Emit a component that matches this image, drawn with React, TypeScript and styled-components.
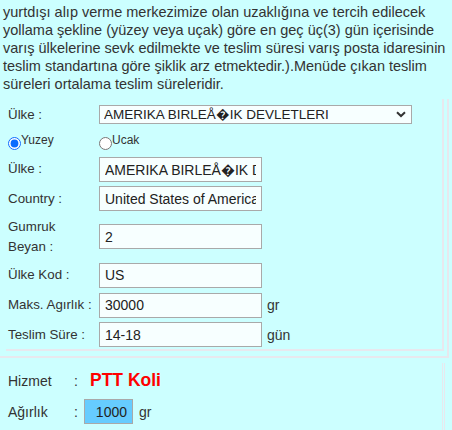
import React from "react";
import styled, { createGlobalStyle } from "styled-components";

const Global = createGlobalStyle`
  html, body { margin: 0; padding: 0; background: #ccffff; }
  body { font-family: "Liberation Sans", Arial, sans-serif; color: #333; font-size: 13.33px; }
`;

const Page = styled.div`
  width: 452px;
  height: 430px;
  overflow: hidden;
  background: #ccffff;
`;

const Intro = styled.p`
  margin: 0;
  padding: 3px 0 0 3px;
  font-size: 14.5px;
  line-height: 18px;
  color: #333;
  white-space: nowrap;
`;

const OuterBox = styled.div`
  margin-top: 6px;
  width: 447px;
  border-right: 2px solid #e8e8ee;
  border-bottom: 2px solid #e8e8ee;
  padding: 0 0 5px 0;
`;

const InnerBox = styled.div`
  margin-left: 6px;
  width: 434px;
  border-right: 2px solid #e8e8ee;
  border-bottom: 2px solid #e8e8ee;
  padding: 2px 0 0 2px;
`;

const FormGrid = styled.div`
  display: grid;
  grid-template-columns: 91px 1fr;
  align-items: center;
`;

const Label = styled.div<{ $h?: number }>`
  font-size: 13.33px;
  line-height: 20px;
  color: #333;
  height: ${(p) => (p.$h ? `${p.$h}px` : "auto")};
  display: flex;
  align-items: center;
`;

const Cell = styled.div<{ $h: number }>`
  height: ${(p) => p.$h}px;
  display: flex;
  align-items: center;
  gap: 5px;
`;

const SelectWrap = styled.div`
  position: relative;
  width: 313px;
  height: 19px;
`;

const Select = styled.select`
  appearance: none;
  -webkit-appearance: none;
  width: 313px;
  height: 19px;
  border: 1px solid #a9a9a9;
  border-radius: 0;
  background: #f7ffff;
  font-family: "Liberation Sans", Arial, sans-serif;
  font-size: 13.5px;
  color: #222;
  padding: 0 0 0 4px;
  outline: none;
`;

const Chevron = styled.svg`
  position: absolute;
  right: 6px;
  top: 6px;
  pointer-events: none;
`;

const TextInput = styled.input<{ $w?: number; $bg?: string; $align?: string }>`
  box-sizing: border-box;
  width: ${(p) => p.$w ?? 163}px;
  height: 25px;
  border: 1px solid #a9a9a9;
  border-radius: 0;
  background: ${(p) => p.$bg ?? "#f7ffff"};
  font-family: "Liberation Sans", Arial, sans-serif;
  font-size: 14px;
  color: #222;
  padding: 0 5px 0 5px;
  text-align: ${(p) => p.$align ?? "left"};
  outline: none;
`;

const Unit = styled.span`
  font-size: 14px;
  color: #333;
`;

const RadioRow = styled.div`
  display: contents;
`;

const RadioLabel = styled.label`
  display: flex;
  align-items: flex-start;
  font-size: 12px;
  color: #333;
  height: 26px;
  padding-top: 5px;
  box-sizing: border-box;
`;

const Radio = styled.input`
  margin: 4px 0 0 0;
  width: 13px;
  height: 13px;
  accent-color: #0a6cff;
`;

const ServiceBox = styled.div`
  margin-top: 5px;
  width: 445px;
  border-right: 3px double #e8e8ee;
  padding: 4px 0 0 8px;
  box-sizing: border-box;
  height: 80px;
`;

const ServiceGrid = styled.div`
  display: grid;
  grid-template-columns: 66px 10px auto;
  align-items: center;
  row-gap: 4px;
`;

const ServiceLabel = styled.span`
  font-size: 14px;
  color: #333;
`;

const Colon = styled.span`
  font-size: 14px;
  color: #333;
`;

const ServiceName = styled.span`
  font-size: 17.5px;
  font-weight: bold;
  color: #ff0000;
  padding-left: 6px;
`;

const ServiceRow = styled.div<{ $h: number }>`
  display: flex;
  align-items: center;
  gap: 6px;
  height: ${(p) => p.$h}px;
`;

const country = "AMERIKA BIRLEÅ\uFFFDIK DEVLETLERI";

export default function App() {
  return (
    <Page>
      <Global />
      <Intro>
        yurtdışı alıp verme merkezimize olan uzaklığına ve tercih edilecek
        <br />
        yollama şekline (yüzey veya uçak) göre en geç üç(3) gün içerisinde
        <br />
        varış ülkelerine sevk edilmekte ve teslim süresi varış posta idaresinin
        <br />
        teslim standartına göre şiklik arz etmektedir.).Menüde çıkan teslim
        <br />
        süreleri ortalama teslim süreleridir.
      </Intro>
      <OuterBox>
        <InnerBox>
          <FormGrid>
            <Label $h={27}>Ülke :</Label>
            <Cell $h={27}>
              <SelectWrap>
                <Select defaultValue="us">
                  <option value="us">{country}</option>
                </Select>
                <Chevron width="10" height="7" viewBox="0 0 10 7">
                  <path d="M1 1.2 L5 5 L9 1.2" fill="none" stroke="#333" strokeWidth="2" />
                </Chevron>
              </SelectWrap>
            </Cell>
            <RadioRow>
              <RadioLabel>
                <Radio type="radio" name="tip" defaultChecked />
                Yuzey
              </RadioLabel>
              <RadioLabel>
                <Radio type="radio" name="tip" />
                Ucak
              </RadioLabel>
            </RadioRow>
            <Label $h={30}>Ülke :</Label>
            <Cell $h={30}>
              <TextInput defaultValue={country} readOnly />
            </Cell>
            <Label $h={29}>Country :</Label>
            <Cell $h={29}>
              <TextInput defaultValue="United States of America" readOnly />
            </Cell>
            <Label $h={47}>
              Gumruk
              <br />
              Beyan :
            </Label>
            <Cell $h={47}>
              <TextInput defaultValue="2" readOnly />
            </Cell>
            <Label $h={30}>Ülke Kod :</Label>
            <Cell $h={30}>
              <TextInput defaultValue="US" readOnly />
            </Cell>
            <Label $h={30}>Maks. Agırlık :</Label>
            <Cell $h={30}>
              <TextInput defaultValue="30000" readOnly />
              <Unit>gr</Unit>
            </Cell>
            <Label $h={29}>Teslim Süre :</Label>
            <Cell $h={29}>
              <TextInput defaultValue="14-18" readOnly />
              <Unit>gün</Unit>
            </Cell>
          </FormGrid>
        </InnerBox>
      </OuterBox>
      <ServiceBox>
        <ServiceGrid>
          <ServiceLabel>Hizmet</ServiceLabel>
          <Colon>:</Colon>
          <ServiceRow $h={27}>
            <ServiceName>PTT Koli</ServiceName>
          </ServiceRow>
          <ServiceLabel>Ağırlık</ServiceLabel>
          <Colon>:</Colon>
          <ServiceRow $h={27}>
            <TextInput $w={49} $bg="#66ccff" $align="right" defaultValue="1000" readOnly />
            <Unit>gr</Unit>
          </ServiceRow>
          <ServiceLabel></ServiceLabel>
          <Colon></Colon>
          <ServiceRow $h={27}>
            <TextInput $w={49} defaultValue="" readOnly />
          </ServiceRow>
        </ServiceGrid>
      </ServiceBox>
    </Page>
  );
}
